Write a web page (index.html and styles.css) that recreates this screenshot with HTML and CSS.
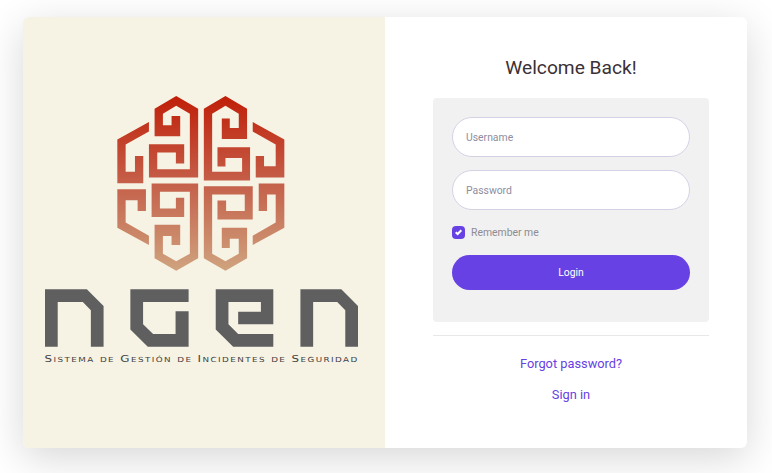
FILE: index.html
```html
<!DOCTYPE html>
<html lang="en">
<head>
  <meta charset="UTF-8" />
  <meta name="viewport" content="width=device-width, initial-scale=1.0" />
  <title>NGEN Login</title>
  <link rel="stylesheet" href="styles.css">
</head>
<body>
  <main class="card">
    <section class="brand">
      <svg class="brand-mark" viewBox="53 34 503 526" aria-hidden="true">
        <defs>
          <linearGradient id="markFill" gradientUnits="userSpaceOnUse" x1="0" y1="34" x2="0" y2="560">
            <stop offset="0" stop-color="#c01f08" />
            <stop offset="0.5" stop-color="#c5604a" />
            <stop offset="1" stop-color="#cfa37e" />
          </linearGradient>
        </defs>
        <g fill="url(#markFill)">
          <polygon points="165,72 230,34 296,72 296,279 148,279 148,179 254,179 254,237 229,237 229,204 173,204 173,254 271,254 271,87 230,63 190,87 190,122 216,122 216,94 242,94 242,155 165,155" />
          <polygon points="313,72 378,34 443,72 443,163 367,163 367,102 391,102 391,130 418,130 418,87 378,63 338,87 338,262 428,262 428,220 378,220 378,246 354,246 354,188 452,188 452,288 313,288" />
          <polygon points="148,112 148,141 78,180 78,262 106,262 106,214 131,214 131,296 53,296 53,165" />
          <polygon points="460,112 555,165 555,279 469,279 469,214 494,214 494,245 529,245 529,180 460,141" />
          <polygon points="53,314 139,314 139,380 114,380 114,347 78,347 78,414 148,454 148,482 53,430" />
          <polygon points="156,297 296,297 296,522 230,559 165,522 165,421 242,421 242,482 216,482 216,455 190,455 190,508 230,531 271,508 271,322 181,322 181,372 229,372 229,340 254,340 254,398 156,398" />
          <polygon points="313,305 460,305 460,405 354,405 354,348 380,348 380,380 436,380 436,330 338,330 338,508 378,531 418,508 418,463 391,463 391,491 367,491 367,430 443,430 443,522 378,559 313,522" />
          <polygon points="478,297 555,297 555,430 460,482 460,454 529,414 529,330 503,330 503,380 478,380" />
        </g>
      </svg>
      <svg class="brand-name" viewBox="45 40 935 172" role="img" aria-label="NGEN">
        <g fill="#5f5f60">
          <polygon points="45,40 170,40 220,90 220,212 182,212 182,103 158,78 83,78 83,212 45,212" />
          <polygon points="300,40 474,40 474,78 338,78 338,145 368,174 435,174 435,106 474,106 474,212 352,212 300,160" />
          <polygon points="555,40 727,40 727,145 622,145 622,107 690,107 690,78 593,78 593,145 622,174 727,174 727,212 607,212 555,160" />
          <polygon points="808,40 930,40 980,90 980,212 942,212 942,103 918,78 846,78 846,212 808,212" />
        </g>
      </svg>
      <p class="brand-tagline">Sistema de Gestión de Incidentes de Seguridad</p>
    </section>

    <section class="panel">
      <h1 class="title">Welcome Back!</h1>
      <form class="login-form">
        <input class="field" type="text" name="username" placeholder="Username" />
        <input class="field" type="password" name="password" placeholder="Password" />
        <label class="remember">
          <span class="check">
            <svg viewBox="0 0 14 14" width="14" height="14" aria-hidden="true">
              <path d="M4 7.2 6.1 9.2 10 5.2" fill="none" stroke="#fff" stroke-width="2.2" />
            </svg>
          </span>
          Remember me
        </label>
        <button class="btn" type="button">Login</button>
      </form>
      <hr class="divider" />
      <a class="link link-forgot" href="#">Forgot password?</a>
      <a class="link link-signin" href="#">Sign in</a>
    </section>
  </main>
</body>
</html>
```

FILE: styles.css
```css
* {
  margin: 0;
  padding: 0;
  box-sizing: border-box;
}

body {
  font-family: 'Roboto', sans-serif;
  background: #fff;
  height: 473px;
  overflow: hidden;
  padding: 17px 25px 25px 23px;
}

.card {
  display: grid;
  grid-template-columns: 362px 362px;
  height: 431px;
  background: #fff;
  border-radius: 6px;
  box-shadow: 0 10px 40px rgba(0, 0, 0, 0.16);
  overflow: hidden;
}

.brand {
  background: #f6f2e4;
  display: flex;
  flex-direction: column;
  align-items: center;
  padding: 79px 5px 0 0;
}

.brand-mark {
  width: 168px;
  height: 175px;
  margin-right: 1px;
}

.brand-name {
  width: 313px;
  height: 58px;
  margin-top: 18px;
}

/* the logo lettering is an extended face, so stretch it */
.brand-tagline {
  margin-top: 5px;
  font-family: 'DejaVu Sans', sans-serif;
  font-variant: small-caps;
  font-size: 9.5px;
  line-height: 14px;
  letter-spacing: 1.15px;
  white-space: nowrap;
  color: #404040;
  transform: scaleX(1.25);
}

.panel {
  display: flex;
  flex-direction: column;
  align-items: center;
  padding: 39px 38px 0 48px;
}

.title {
  font-size: 19.2px;
  font-weight: 400;
  line-height: 24px;
  color: #3b3136;
  margin-bottom: 18px;
}

.login-form {
  width: 276px;
  height: 224px;
  background: #f1f1f1;
  border-radius: 4px;
  padding: 19px;
  display: flex;
  flex-direction: column;
}

.field {
  width: 100%;
  height: 40px;
  padding: 1px 13px 0;
  font-family: inherit;
  font-size: 10.4px;
  border: 1px solid #d4d1e5;
  border-radius: 20px;
  background: #fff;
  margin-bottom: 13px;
}

.field::placeholder {
  color: #8f8d9f;
  opacity: 1;
}

.remember {
  display: flex;
  align-items: center;
  gap: 6px;
  height: 14px;
  margin: 2px 0 16px;
  font-size: 10.4px;
  color: #8e8b91;
}

.check {
  width: 13px;
  height: 13px;
  border-radius: 4px;
  background: #6741e3;
  display: flex;
  align-items: center;
  justify-content: center;
}

.btn {
  width: 100%;
  height: 35px;
  font-family: inherit;
  font-size: 10.4px;
  color: #fff;
  background: #6741e3;
  border: none;
  border-radius: 18px;
  cursor: pointer;
}

.divider {
  width: 276px;
  border: none;
  border-top: 1px solid #e8e8e8;
  margin-top: 13px;
}

.link {
  font-size: 12.8px;
  line-height: 16px;
  color: #6741e3;
  text-decoration: none;
}

.link-forgot {
  margin-top: 20px;
}

.link-signin {
  margin-top: 15px;
}
```
